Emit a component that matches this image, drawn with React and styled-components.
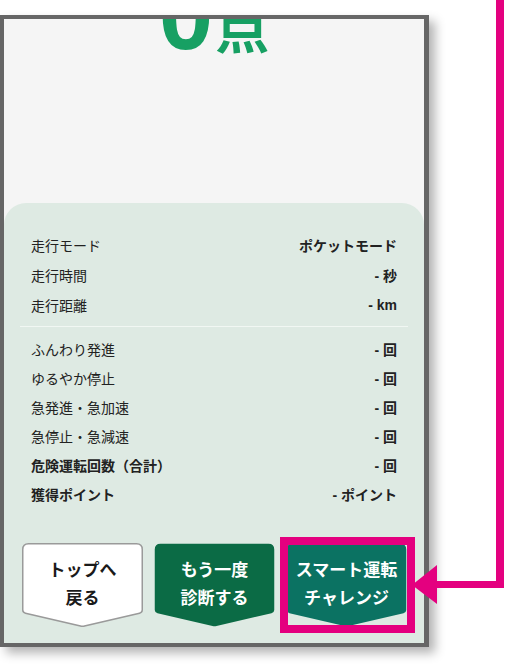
import React from "react";
import styled, { createGlobalStyle } from "styled-components";

const Global = createGlobalStyle`
  html, body { margin: 0; padding: 0; background: #ffffff; }
  body { font-family: "Noto Sans CJK JP", "Noto Sans", sans-serif; }
  * { box-sizing: border-box; }
`;

const Page = styled.div`
  position: relative;
  width: 506px;
  height: 666px;
  overflow: hidden;
  background: #ffffff;
`;

const Frame = styled.div`
  margin-top: 15px;
  width: 429px;
  height: 632px;
  border: 4px solid #666666;
  border-right-width: 5px;
  background: #f5f5f5;
  box-shadow: 6px 6px 10px rgba(0, 0, 0, 0.3);
  display: flex;
  flex-direction: column;
  overflow: hidden;
`;

const ScoreArea = styled.div`
  height: 184px;
  flex: none;
  display: flex;
  justify-content: center;
  align-items: flex-start;
`;

const ScoreLine = styled.div`
  display: flex;
  align-items: baseline;
  margin-top: -53px;
  color: #17a063;
  font-family: "Noto Sans CJK JP", sans-serif;
  font-weight: 700;
  line-height: 1;
`;

const ScoreNum = styled.span`
  font-family: "Liberation Sans", "Noto Sans CJK JP", sans-serif;
  font-size: 98px;
  font-weight: 700;
`;

const ScoreUnit = styled.span`
  font-size: 54px;
  font-weight: 700;
  margin-left: 2px;
`;

const Panel = styled.div`
  flex: 1;
  background: #deeae3;
  border-radius: 22px 22px 0 0;
  padding: 27px 16px 0;
  display: flex;
  flex-direction: column;
`;

const Group = styled.div`
  display: flex;
  flex-direction: column;
`;

const Row = styled.div`
  height: ${(p) => p.$h}px;
  padding: 0 11px;
  display: flex;
  align-items: center;
  justify-content: space-between;
  font-size: 14px;
  color: #222222;
`;

const Label = styled.span`
  font-family: "Noto Sans CJK JP", sans-serif;
  font-weight: ${(p) => (p.$bold ? 700 : 400)};
`;

const Value = styled.span`
  font-family: "Liberation Sans", "Noto Sans CJK JP", sans-serif;
  font-weight: 700;
`;

const Divider = styled.div`
  height: 1px;
  background: #f1f7f3;
  margin: 6px 0 7px;
`;

const Buttons = styled.div`
  margin-top: 35px;
  padding: 0 1px 0 2px;
  display: flex;
  gap: 11px;
`;

const Btn = styled.div`
  position: relative;
  flex: 1;
  height: 84px;
  padding-top: 12px;
  text-align: center;
  font-family: "Noto Sans CJK JP", sans-serif;
  font-weight: 700;
  font-size: 17px;
  line-height: 28px;
  color: ${(p) => (p.$light ? "#1a1a1a" : "#ffffff")};
`;

const Shape = styled.svg`
  position: absolute;
  inset: 0;
  width: 100%;
  height: 100%;
  z-index: 0;
`;

const BtnText = styled.div`
  position: relative;
  z-index: 1;
`;

const Overlay = styled.svg`
  position: absolute;
  left: 0;
  top: 0;
  width: 506px;
  height: 666px;
  pointer-events: none;
  z-index: 10;
`;

const shapePath =
  "M6.5,0.75 H114.5 Q120.25,0.75 120.25,6.5 V67 Q120.25,69.5 117.5,70.2 L62.5,83 Q60.5,83.6 58.5,83 L3.5,70.2 Q0.75,69.5 0.75,67 V6.5 Q0.75,0.75 6.5,0.75 Z";

function ActionButton({ fill, stroke, light, lines }) {
  return (
    <Btn $light={light}>
      <Shape viewBox="0 0 121 84" preserveAspectRatio="none">
        <path d={shapePath} fill={fill} stroke={stroke || "none"} strokeWidth={stroke ? 1.5 : 0} />
      </Shape>
      <BtnText>
        {lines.map((l) => (
          <div key={l}>{l}</div>
        ))}
      </BtnText>
    </Btn>
  );
}

const group1 = [
  ["走行モード", "ポケットモード"],
  ["走行時間", "- 秒"],
  ["走行距離", "- km"],
];

const group2 = [
  ["ふんわり発進", "- 回"],
  ["ゆるやか停止", "- 回"],
  ["急発進・急加速", "- 回"],
  ["急停止・急減速", "- 回"],
  ["危険運転回数（合計）", "- 回", true],
  ["獲得ポイント", "- ポイント", true],
];

export default function App() {
  return (
    <Page>
      <Global />
      <Frame>
        <ScoreArea>
          <ScoreLine>
            <ScoreNum>0</ScoreNum>
            <ScoreUnit>点</ScoreUnit>
          </ScoreLine>
        </ScoreArea>
        <Panel>
          <Group>
            {group1.map(([l, v]) => (
              <Row key={l} $h={30}>
                <Label>{l}</Label>
                <Value>{v}</Value>
              </Row>
            ))}
          </Group>
          <Divider />
          <Group>
            {group2.map(([l, v, b]) => (
              <Row key={l} $h={29}>
                <Label $bold={b}>{l}</Label>
                <Value>{v}</Value>
              </Row>
            ))}
          </Group>
          <Buttons>
            <ActionButton fill="#ffffff" stroke="#9a9a9a" light lines={["トップへ", "戻る"]} />
            <ActionButton fill="#0b6b45" lines={["もう一度", "診断する"]} />
            <ActionButton fill="#0b7262" lines={["スマート運転", "チャレンジ"]} />
          </Buttons>
        </Panel>
      </Frame>
      <Overlay viewBox="0 0 506 666">
        <rect x="496" y="0" width="8" height="588" fill="#e4007f" />
        <rect x="434" y="581" width="70" height="7" fill="#e4007f" />
        <polygon points="412,585 437,565 437,604" fill="#e4007f" />
        <rect x="284" y="541" width="127" height="88" fill="none" stroke="#e4007f" strokeWidth="8" />
      </Overlay>
    </Page>
  );
}
